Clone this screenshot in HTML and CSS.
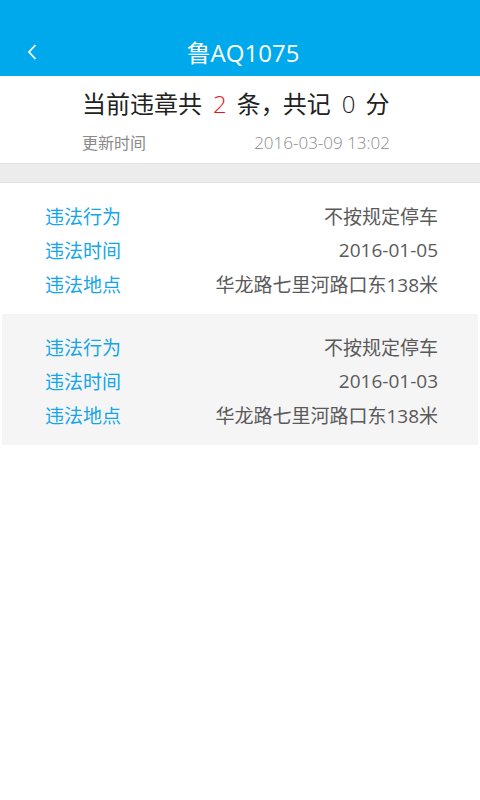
FILE: index.html
```html
<!DOCTYPE html>
<html lang="zh-CN">
<head>
    <meta charset="UTF-8">
    <meta name="viewport" content="width=device-width, initial-scale=1.0">
    <title>违章查询</title>
    <link rel="stylesheet" href="styles.css">
</head>
<body>

<div class="topbar">
    <div class="bar">
        <span class="back">
            <svg width="10" height="16" viewBox="0 0 10 16"><path d="M8.5 1 L2 8 L8.5 15" fill="none" stroke="#fff" stroke-width="1.8"/></svg>
        </span>
        <h1 class="title">鲁AQ1075</h1>
    </div>
</div>

<div class="summary">
    <div class="summary-inner">
        <div class="total">当前违章共<span class="num red">2</span>条<span class="comma">，</span>共记<span class="num">0</span>分</div>
        <div class="update">
            <span>更新时间</span>
            <span class="date">2016-03-09 13:02</span>
        </div>
    </div>
</div>

<div class="divider"></div>

<div id="list"></div>

<script>
    const records = [
        { act: '不按规定停车', time: '2016-01-05', place: '华龙路七里河路口东138米' },
        { act: '不按规定停车', time: '2016-01-03', place: '华龙路七里河路口东138米' }
    ];

    function renderList() {
        const list = document.getElementById('list');
        records.forEach((rec, i) => {
            const card = document.createElement('div');
            card.className = 'card' + (i % 2 ? ' alt' : '');
            card.innerHTML = `
                <div class="row"><span class="label">违法行为</span><span class="value">${rec.act}</span></div>
                <div class="row"><span class="label">违法时间</span><span class="value">${rec.time}</span></div>
                <div class="row"><span class="label">违法地点</span><span class="value">${rec.place}</span></div>`;
            list.appendChild(card);
        });
    }

    document.addEventListener('DOMContentLoaded', renderList);
</script>

</body>
</html>
```

FILE: styles.css
```css
body {
    margin: 0;
    font-family: 'Open Sans', 'Noto Sans CJK SC', sans-serif;
    background-color: #fff;
    color: #222;
}
.topbar {
    background-color: #00a9ec;
    padding-top: 26px;
}
.bar {
    height: 50px;
    display: flex;
    align-items: center;
    justify-content: center;
    position: relative;
}
.back {
    position: absolute;
    left: 27px;
    top: 18px;
    display: flex;
}
.title {
    margin: 0 0 0 6px;
    font-size: 24px;
    font-weight: 400;
    color: #fff;
}
.summary {
    display: flex;
    justify-content: center;
    padding: 11px 0 8px;
}
.summary-inner {
    width: 308px;
    margin-left: -8px;
}
.total {
    font-size: 24px;
    line-height: 34px;
    white-space: nowrap;
}
.num {
    margin: 0 10px 0 11px;
    font-weight: 300;
}
.red {
    color: #e8141b;
}
.comma {
    margin-right: -2px;
}
.update {
    display: flex;
    justify-content: space-between;
    align-items: baseline;
    font-size: 16px;
    line-height: 24px;
    color: #8a8a8a;
    margin-top: 10px;
}
.date {
    font-size: 17px;
    font-weight: 300;
}
.divider {
    height: 18px;
    background-color: #ececec;
    border-top: 1px solid #e0e0e0;
    border-bottom: 1px solid #e0e0e0;
}
.card {
    margin: 0 2px;
    padding: 16px 40px 13px 43px;
}
.card.alt {
    background-color: #f5f5f5;
}
.row {
    display: flex;
    justify-content: space-between;
    align-items: center;
    height: 34px;
    font-size: 19px;
}
.label {
    color: #14a6e9;
}
.value {
    color: #5a5a5a;
}
```
